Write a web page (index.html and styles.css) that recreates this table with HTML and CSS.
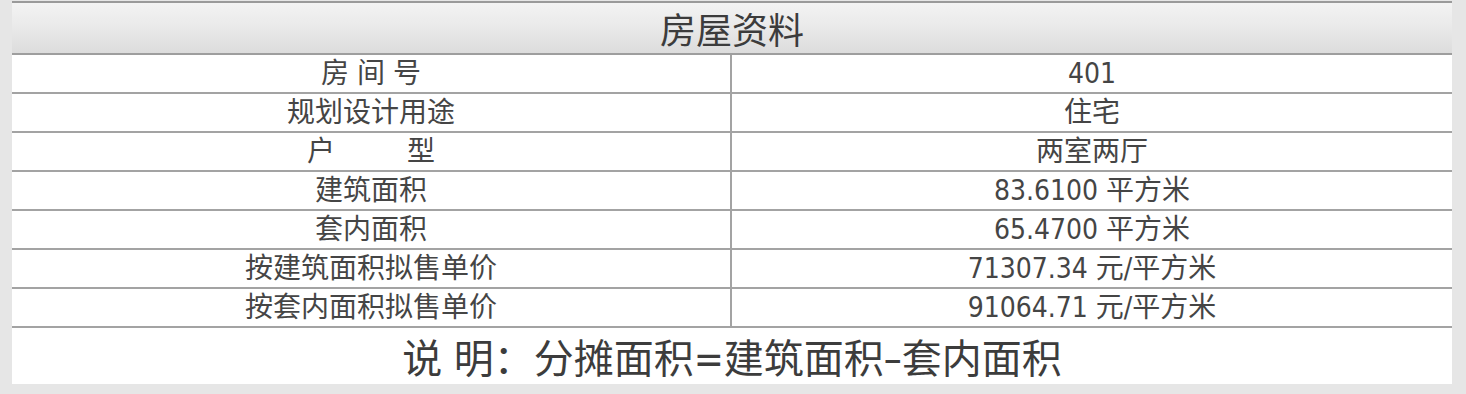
FILE: index.html
```html
<!DOCTYPE html>
<html lang="zh-CN">
<head>
<meta charset="utf-8">
<title>房屋资料</title>
<link rel="stylesheet" href="styles.css">
</head>
<body>
<div class="sheet">
  <div class="title">房屋资料</div>
  <div class="grid">
    <div class="cell key">房 间 号</div><div class="cell val">401</div>
    <div class="cell key">规划设计用途</div><div class="cell val">住宅</div>
    <div class="cell key pre">户         型</div><div class="cell val">两室两厅</div>
    <div class="cell key">建筑面积</div><div class="cell val">83.6100 平方米</div>
    <div class="cell key">套内面积</div><div class="cell val">65.4700 平方米</div>
    <div class="cell key">按建筑面积拟售单价</div><div class="cell val">71307.34 元/平方米</div>
    <div class="cell key">按套内面积拟售单价</div><div class="cell val">91064.71 元/平方米</div>
  </div>
  <div class="note">说 明：分摊面积=建筑面积–套内面积</div>
</div>
</body>
</html>
```

FILE: styles.css
```css
html, body {
  margin: 0;
  padding: 0;
}
body {
  background: #e6e6e6;
  width: 1466px;
  height: 394px;
  overflow: hidden;
  font-family: "DejaVu Sans Condensed", "Noto Sans CJK SC", sans-serif;
  color: #454545;
}
.sheet {
  margin: 1px 14px 0 12px;
  background: #ffffff;
  border-top: 2px solid #9a9a9a;
}
.title {
  height: 50px;
  border-bottom: 2px solid #9e9e9e;
  background: linear-gradient(to bottom, #f3f3f3 0%, #e9e9e9 50%, #dcdcdc 100%);
  display: flex;
  align-items: center;
  justify-content: center;
  font-size: 36px;
  color: #3c3c3c;
}
.grid {
  display: grid;
  grid-template-columns: 1fr 1fr;
}
.cell {
  height: 37px;
  border-bottom: 2px solid #a3a3a3;
  display: flex;
  align-items: center;
  justify-content: center;
  font-size: 28px;
  line-height: 1;
}
.key {
  border-right: 2px solid #a3a3a3;
}
.pre {
  white-space: pre;
}
.note {
  height: 56px;
  display: flex;
  align-items: center;
  justify-content: center;
  font-size: 40px;
  color: #3c3c3c;
}
```
